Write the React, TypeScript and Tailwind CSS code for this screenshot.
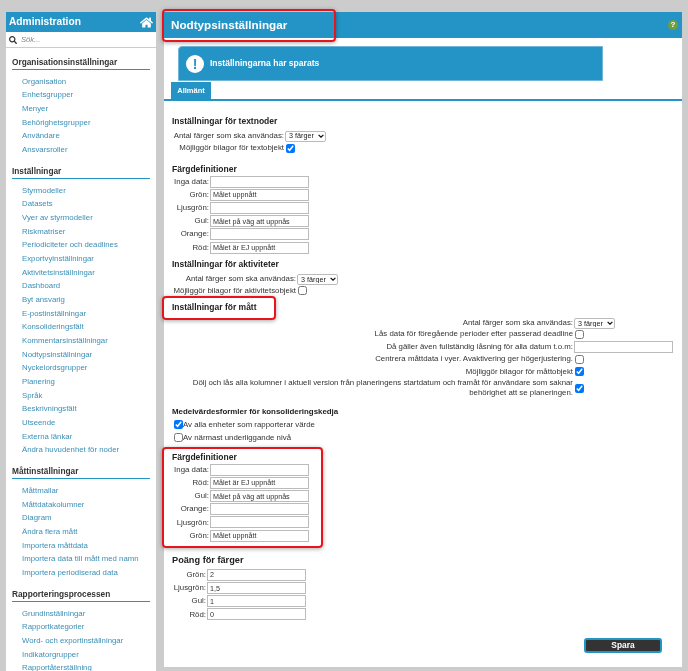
import React from "react";
import { FaHome, FaSearch } from "react-icons/fa";

const sections: [string, string[]][] = [
  ["Organisationsinställningar", ["Organisation", "Enhetsgrupper", "Menyer", "Behörighetsgrupper", "Användare", "Ansvarsroller"]],
  ["Inställningar", ["Styrmodeller", "Datasets", "Vyer av styrmodeller", "Riskmatriser", "Periodiciteter och deadlines", "Exportvyinställningar", "Aktivitetsinställningar", "Dashboard", "Byt ansvarig", "E-postinställningar", "Konsolideringsfält", "Kommentarsinställningar", "Nodtypsinställningar", "Nyckelordsgrupper", "Planering", "Språk", "Beskrivningsfält", "Utseende", "Externa länkar", "Ändra huvudenhet för noder"]],
  ["Måttinställningar", ["Måttmallar", "Måttdatakolumner", "Diagram", "Ändra flera mått", "Importera måttdata", "Importera data till mått med namn", "Importera periodiserad data"]],
  ["Rapporteringsprocessen", ["Grundinställningar", "Rapportkategorier", "Word- och exportinställningar", "Indikatorgrupper", "Rapportåterställning"]],
];

function Sidebar() {
  return (
    <aside className="w-[150px] shrink-0 self-stretch">
      <div className="h-[20px] bg-[#2493c5] flex items-center justify-between pl-[3px] pr-[3px] text-white font-bold text-[10.2px]">
        <span>Administration</span>
        <FaHome className="w-[13px] h-[13px]" />
      </div>
      <div className="h-[16px] bg-white border-b border-[#ccc] flex items-center pl-[3px] gap-[4px] text-[7.6px] italic text-[#888]">
        <FaSearch className="w-[8px] h-[8px] text-[#333]" />
        <span>Sök...</span>
      </div>
      <div className="bg-white h-[640px] pt-[8px] pl-[6px] pr-[6px]">
        {sections.map(([title, links]) => (
          <div key={title} className="mb-[8.5px]">
            <h2 className="text-[8.3px] font-bold text-[#333] leading-[13px] border-b border-[#2493c5] mb-[4.5px]">{title}</h2>
            <ul className="pl-[10px]">
              {links.map((l) => (
                <li key={l} className="text-[7.8px] leading-[13.67px] text-[#3a8fb7] whitespace-nowrap">{l}</li>
              ))}
            </ul>
          </div>
        ))}
      </div>
    </aside>
  );
}

function Row({ label, w, value }: { label: string; w: string; value?: string }) {
  return (
    <div className="flex items-center h-[13.2px] gap-[1px]">
      <span className={`${w} text-right shrink-0 whitespace-nowrap`}>{label}</span>
      <input readOnly value={value ?? ""} className="w-[99px] h-[12px] bg-white border border-[#bbb] px-[2px] text-[7.2px] text-[#333] outline-none" />
    </div>
  );
}

function Select() {
  return (
    <span className="relative inline-flex w-[41px] h-[11px] shrink-0">
      <select defaultValue="3" className="appearance-none w-full h-full border border-[#bbb] rounded-[2px] bg-white text-[7.2px] text-[#222] p-0 pl-[3px] leading-none">
        <option value="3">3 färger</option>
      </select>
      <svg viewBox="0 0 10 6" className="absolute right-[2px] top-[3.5px] w-[6px] h-[4px] pointer-events-none" fill="none" stroke="#111" strokeWidth="2"><path d="M1 1l4 4 4-4" /></svg>
    </span>
  );
}

function Check({ on = false }: { on?: boolean }) {
  return <input type="checkbox" readOnly checked={on} className="w-[9px] h-[9px] m-0 accent-[#0075ff] shrink-0" />;
}

function H({ children, className = "" }: { children: React.ReactNode; className?: string }) {
  return <h3 className={`font-bold text-[8.5px] text-[#222] leading-[12px] ${className}`}>{children}</h3>;
}

function Main() {
  return (
    <main className="w-[518px] h-[655px] bg-white shrink-0 flex flex-col text-[7.85px] text-[#333]">
      <div className="h-[26px] shrink-0 bg-[#2493c5] flex items-center justify-between pl-[7px] pr-[4px]">
        <span className="text-white font-bold text-[11.7px]">Nodtypsinställningar</span>
        <span className="w-[10px] h-[10px] rounded-full bg-[#6f9f3f] text-white text-[8px] font-bold flex items-center justify-center leading-none">?</span>
      </div>
      <div className="ml-[14px] mt-[8px] w-[425px] h-[35px] bg-[#2493c5] border border-[#6fb6d8] rounded-tl-[4px] flex items-center pl-[7px] gap-[6px] shrink-0">
        <span className="w-[18px] h-[18px] rounded-full bg-white text-[#2493c5] text-[14px] font-bold flex items-center justify-center leading-none">!</span>
        <span className="text-white font-bold text-[8.55px]">Inställningarna har sparats</span>
      </div>
      <div className="border-b-2 border-[#2493c5] h-[19px] pl-[7px] shrink-0 mt-[1px]">
        <div className="w-[40px] h-[18px] bg-[#2493c5] text-white font-bold text-[7.5px] flex items-center justify-center">Allmänt</div>
      </div>
      <div className="pl-[8px] pt-[14px] flex flex-col">
        <H>Inställningar för textnoder</H>
        <div className="flex items-center h-[12px] gap-[1px] mt-[3px]">
          <span className="w-[112px] text-right whitespace-nowrap">Antal färger som ska användas:</span>
          <Select />
        </div>
        <div className="flex items-center h-[12px] gap-[2px]">
          <span className="w-[112px] text-right whitespace-nowrap">Möjliggör bilagor för textobjekt</span>
          <Check on />
        </div>
        <H className="mt-[9px]">Färgdefinitioner</H>
        <div className="flex flex-col">
          <Row w="w-[37px]" label="Inga data:" />
          <Row w="w-[37px]" label="Grön:" value="Målet uppnått" />
          <Row w="w-[37px]" label="Ljusgrön:" />
          <Row w="w-[37px]" label="Gul:" value="Målet på väg att uppnås" />
          <Row w="w-[37px]" label="Orange:" />
          <Row w="w-[37px]" label="Röd:" value="Målet är EJ uppnått" />
        </div>
        <H className="mt-[4px]">Inställningar för aktiviteter</H>
        <div className="flex items-center h-[12px] gap-[1px] mt-[3px]">
          <span className="w-[124px] text-right whitespace-nowrap">Antal färger som ska användas:</span>
          <Select />
        </div>
        <div className="flex items-center h-[11px] gap-[2px]">
          <span className="w-[124px] text-right whitespace-nowrap">Möjliggör bilagor för aktivitetsobjekt</span>
          <Check />
        </div>
        <H className="mt-[5px]">Inställningar för mått</H>
        <div className="flex items-center h-[10px] gap-[1px] mt-[5px]">
          <span className="w-[401px] text-right whitespace-nowrap">Antal färger som ska användas:</span>
          <Select />
        </div>
        <div className="flex items-center h-[12px] gap-[2px]">
          <span className="w-[401px] text-right whitespace-nowrap">Lås data för föregående perioder efter passerad deadline</span>
          <Check />
        </div>
        <div className="flex items-center h-[13px] gap-[1px]">
          <span className="w-[401px] text-right whitespace-nowrap">Då gäller även fullständig låsning för alla datum t.o.m:</span>
          <input readOnly className="w-[99px] h-[12px] bg-white border border-[#bbb] outline-none" />
        </div>
        <div className="flex items-center h-[12px] gap-[2px]">
          <span className="w-[401px] text-right whitespace-nowrap">Centrera måttdata i vyer. Avaktivering ger högerjustering.</span>
          <Check />
        </div>
        <div className="flex items-center h-[13px] gap-[2px]">
          <span className="w-[401px] text-right whitespace-nowrap">Möjliggör bilagor för måttobjekt</span>
          <Check on />
        </div>
        <div className="flex items-center gap-[2px]">
          <span className="w-[381px] ml-[20px] text-right leading-[10px]">Dölj och lås alla kolumner i aktuell version från planeringens startdatum och framåt för användare som saknar behörighet att se planeringen.</span>
          <Check on />
        </div>
        <h3 className="font-bold text-[7.9px] text-[#222] leading-[12px] mt-[8px]">Medelvärdesformler för konsolideringskedja</h3>
        <div className="flex items-center h-[13px] pl-[2px] gap-0"><Check on /><span>Av alla enheter som rapporterar värde</span></div>
        <div className="flex items-center h-[13px] pl-[2px] gap-0"><Check /><span>Av närmast underliggande nivå</span></div>
        <H className="mt-[7px]">Färgdefinitioner</H>
        <div className="flex flex-col">
          <Row w="w-[37px]" label="Inga data:" />
          <Row w="w-[37px]" label="Röd:" value="Målet är EJ uppnått" />
          <Row w="w-[37px]" label="Gul:" value="Målet på väg att uppnås" />
          <Row w="w-[37px]" label="Orange:" />
          <Row w="w-[37px]" label="Ljusgrön:" />
          <Row w="w-[37px]" label="Grön:" value="Målet uppnått" />
        </div>
        <h3 className="font-bold text-[9.2px] text-[#222] leading-[12px] mt-[12px]">Poäng för färger</h3>
        <div className="flex flex-col mt-[2px]">
          <Row w="w-[34px]" label="Grön:" value="2" />
          <Row w="w-[34px]" label="Ljusgrön:" value="1,5" />
          <Row w="w-[34px]" label="Gul:" value="1" />
          <Row w="w-[34px]" label="Röd:" value="0" />
        </div>
        <div className="flex justify-end pr-[20px] mt-[17px]">
          <button className="w-[78px] h-[15px] bg-[#333] border-2 border-[#2493c5] rounded-[3px] text-white font-bold text-[8.4px] leading-none">Spara</button>
        </div>
      </div>
    </main>
  );
}

function Mark({ className }: { className: string }) {
  return <div className={`absolute border-[2px] border-[#e8141c] rounded-[4px] shadow-[0_1px_4px_rgba(0,0,0,0.35)] ${className}`} />;
}

export default function App() {
  return (
    <div className="relative h-[671px] w-[688px] overflow-hidden bg-[#cccccc] pt-[12px] pl-[6px] flex gap-[8px] items-start blur-[0.3px]" style={{ fontFamily: '"Liberation Sans", Arial, sans-serif' }}>
      <Sidebar />
      <Main />
      <Mark className="left-[162px] top-[9px] w-[174px] h-[33px]" />
      <Mark className="left-[162px] top-[296px] w-[114px] h-[24px]" />
      <Mark className="left-[162px] top-[447px] w-[161px] h-[101px]" />
    </div>
  );
}
